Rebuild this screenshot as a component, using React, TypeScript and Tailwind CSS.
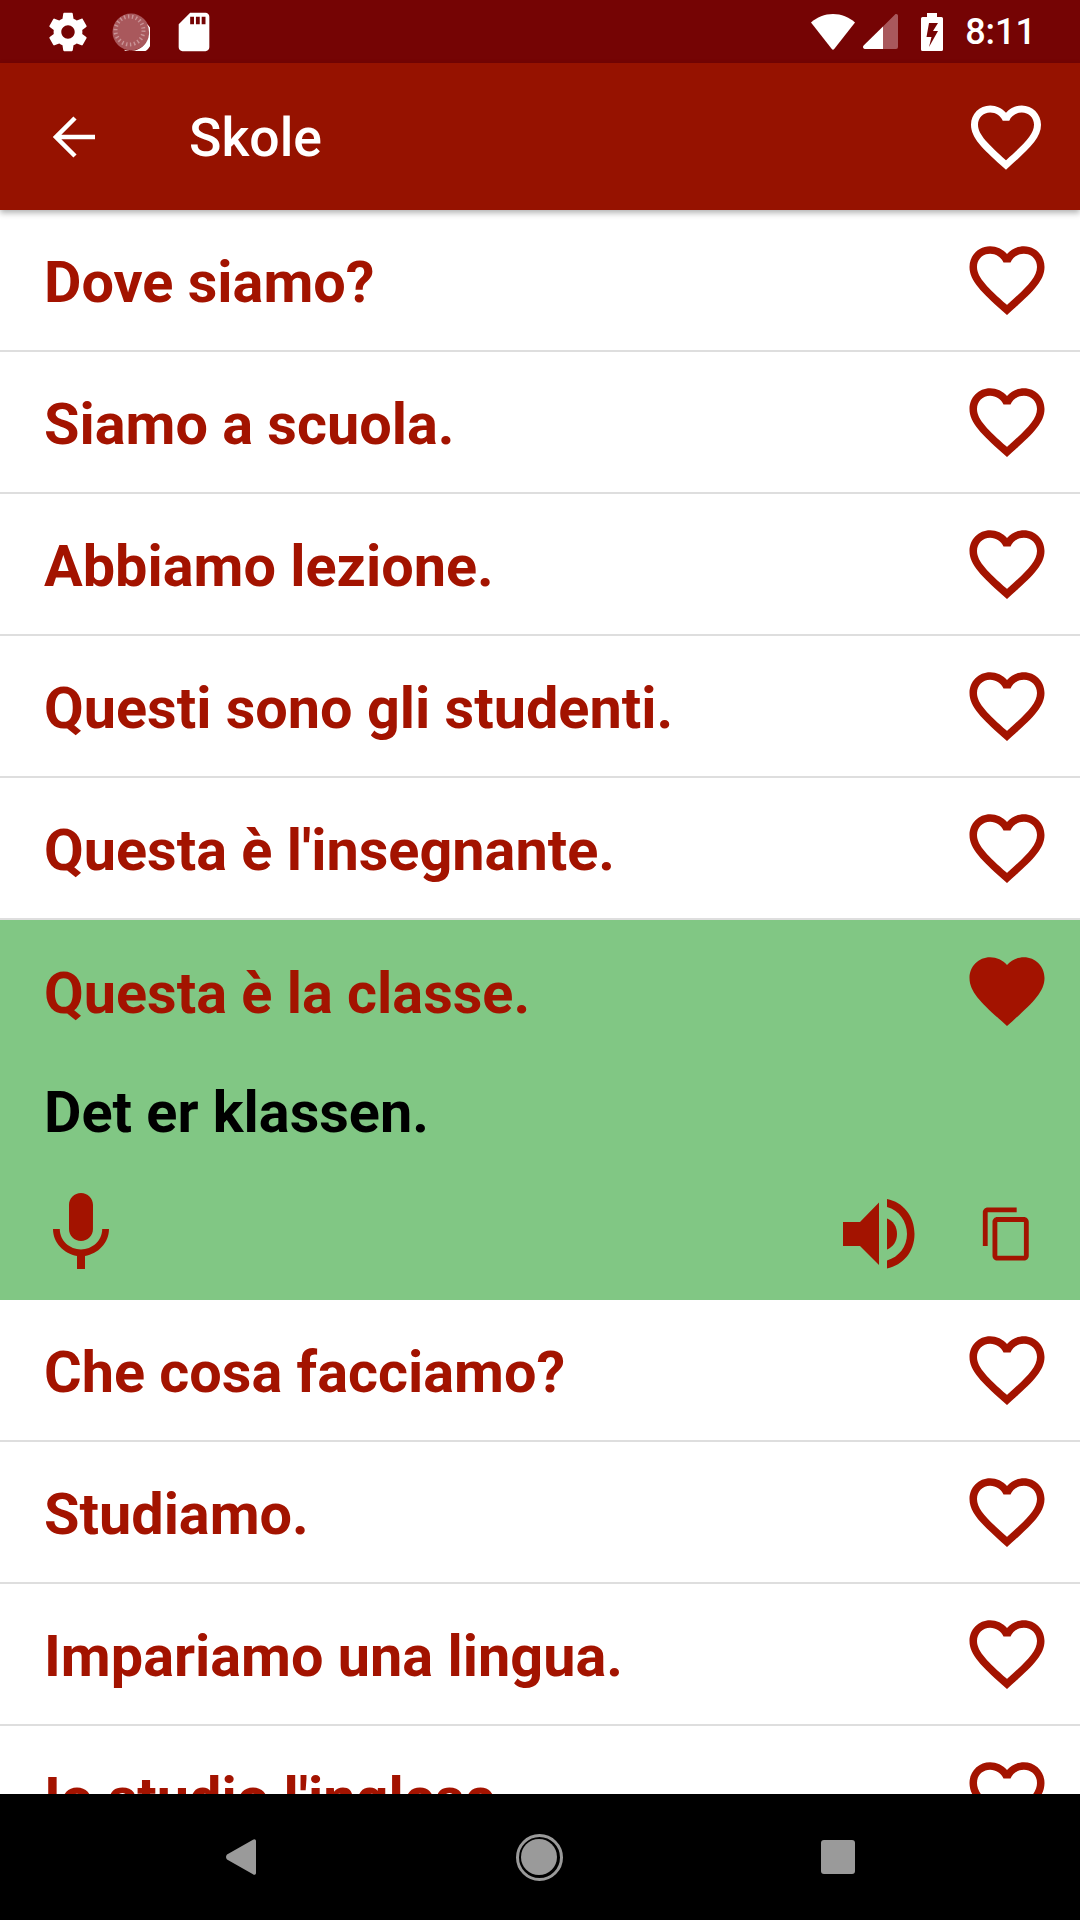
const phrases = [
  "Dove siamo?",
  "Siamo a scuola.",
  "Abbiamo lezione.",
  "Questi sono gli studenti.",
  "Questa è l'insegnante.",
  "Questa è la classe.",
  "Che cosa facciamo?",
  "Studiamo.",
  "Impariamo una lingua.",
  "Io studio l'inglese.",
];

const HEART_OUTLINE =
  "M16.5 3c-1.74 0-3.41.81-4.5 2.09C10.91 3.81 9.24 3 7.5 3 4.42 3 2 5.42 2 8.5c0 3.78 3.4 6.86 8.55 11.54L12 21.35l1.45-1.32C18.6 15.36 22 12.28 22 8.5 22 5.42 19.58 3 16.5 3zm-4.4 15.55l-.1.1-.1-.1C7.14 14.24 4 11.39 4 8.5 4 6.5 5.5 5 7.5 5c1.54 0 3.04.99 3.57 2.36h1.87C13.46 5.99 14.96 5 16.5 5c2 0 3.5 1.5 3.5 3.5 0 2.89-3.14 5.74-7.9 10.05z";
const HEART_FILLED =
  "M12 21.35l-1.45-1.32C5.4 15.36 2 12.28 2 8.5 2 5.42 4.42 3 7.5 3c1.74 0 3.41.81 4.5 2.09C13.09 3.81 14.76 3 16.5 3 19.58 3 22 5.42 22 8.5c0 3.78-3.4 6.86-8.55 11.54L12 21.35z";

function Icon({ d, className }: { d: string; className: string }) {
  return (
    <svg viewBox="0 0 24 24" fill="currentColor" className={className}>
      <path d={d} />
    </svg>
  );
}

function StatusBar() {
  return (
    <div className="flex h-[63px] shrink-0 items-center bg-[#750404] text-white">
      <Icon
        className="ml-[45px] h-[46px] w-[46px]"
        d="M19.43 12.98c.04-.32.07-.64.07-.98s-.03-.66-.07-.98l2.11-1.65c.19-.15.24-.42.12-.64l-2-3.46c-.12-.22-.39-.3-.61-.22l-2.49 1c-.52-.4-1.08-.73-1.69-.98l-.38-2.65C14.46 2.18 14.25 2 14 2h-4c-.25 0-.46.18-.49.42l-.38 2.65c-.61.25-1.17.59-1.69.98l-2.49-1c-.23-.09-.49 0-.61.22l-2 3.46c-.13.22-.07.49.12.64l2.11 1.65c-.04.32-.07.65-.07.98s.03.66.07.98l-2.11 1.65c-.19.15-.24.42-.12.64l2 3.46c.12.22.39.3.61.22l2.49-1c.52.4 1.08.73 1.69.98l.38 2.65c.03.24.24.42.49.42h4c.25 0 .46-.18.49-.42l.38-2.65c.61-.25 1.17-.59 1.69-.98l2.49 1c.23.09.49 0 .61-.22l2-3.46c.12-.22.07-.49-.12-.64l-2.11-1.65zM12 15.5c-1.93 0-3.5-1.57-3.5-3.5s1.57-3.5 3.5-3.5 3.5 1.57 3.5 3.5-1.57 3.5-3.5 3.5z"
      />
      <svg viewBox="0 0 38 38" className="ml-[21px] h-[38px] w-[38px]">
        <circle cx="19" cy="19" r="18.5" fill="#a9585c" />
        <circle cx="17.5" cy="17.5" r="14" fill="none" stroke="#c99396" strokeWidth="4" strokeDasharray="1.4 2.6" />
        <path d="M35 11A18.500 18.500 0 0 1 12 36.800 17 17 0 0 0 35 11z" fill="#fff" />
      </svg>
      <Icon
        className="ml-[21px] h-[46px] w-[46px]"
        d="M18 2h-8L4.02 8 4 20c0 1.1.9 2 2 2h12c1.1 0 2-.9 2-2V4c0-1.1-.9-2-2-2zm-6 6h-2V4h2v4zm3 0h-2V4h2v4zm3 0h-2V4h2v4z"
      />
      <div className="flex-1" />
      <svg viewBox="0 0 44 36" fill="#fff" className="h-[36px] w-[44px]">
        <path d="M0 8.5C6 3.2 13.6 0 22 0s16 3.2 22 8.5L23.2 35a1.6 1.6 0 0 1-2.4 0z" />
      </svg>
      <svg viewBox="0 0 35 35" className="ml-[8px] h-[35px] w-[35px]">
        <path d="M20 12.5 32.5 0a2 2 0 0 1 2.5 2v31a2 2 0 0 1-2 2H20z" fill="#a9585c" />
        <path d="M20 12.5V35H2a2 2 0 0 1-1.4-3.4z" fill="#fff" />
      </svg>
      <svg viewBox="0 0 22 38" fill="#fff" className="ml-[23px] h-[38px] w-[22px]">
        <path
          fillRule="evenodd"
          d="M6 0h10v4h4.500A1.500 1.500 0 0 1 22 5.500V36.500a1.500 1.500 0 0 1-1.500 1.500H1.500A1.500 1.500 0 0 1 0 36.500V5.500A1.500 1.500 0 0 1 1.500 4H6zM8 10 5.500 24h5L8 34 17 18h-5L17 10z"
        />
      </svg>
      <span className="mr-[44px] ml-[22px] text-[36px] font-medium leading-none">8:11</span>
    </div>
  );
}

function Toolbar() {
  return (
    <div className="relative z-10 flex h-[147px] shrink-0 items-center bg-[#961200] text-white shadow-[0_3px_6px_rgba(0,0,0,0.3)]">
      <svg viewBox="0 0 42 42" fill="none" stroke="#fff" strokeWidth="4.500" className="ml-[53px] h-[42px] w-[42px]">
        <path d="M42 21H3M22 2 3 21l19 19" />
      </svg>
      <span className="ml-[94px] flex-1 pt-[3px] text-[53.5px] font-medium leading-none">Skole</span>
      <Icon className="mr-[32px] h-[84px] w-[84px]" d={HEART_OUTLINE} />
    </div>
  );
}

function ActionBar() {
  return (
    <div className="flex h-[115px] items-start text-[#a31300]">
      <Icon
        className="ml-[33px] h-[96px] w-[96px]"
        d="M12 14c1.660 0 2.990-1.340 2.990-3L15 5c0-1.660-1.340-3-3-3S9 3.340 9 5v6c0 1.660 1.340 3 3 3zm5.300-3c0 3-2.540 5.100-5.300 5.100S6.700 14 6.700 11H5c0 3.410 2.720 6.230 6 6.720V21h2v-3.280c3.280-.48 6-3.300 6-6.720h-1.700z"
      />
      <div className="flex-1" />
      <svg viewBox="0 0 72 70" fill="currentColor" className="mt-[14px] h-[70px] w-[72px]">
        <path d="M0 23h17L36 3.500V66L17 47H0z" />
        <path d="M44 19.500c6 2 10 8 10 15.500s-4 13-10 15.500z" />
        <path d="M44 0c16 3 27.500 17 27.500 35S60 66 44 69.500v-8C56 58 64 47.500 64 35S56 11 44 8z" />
      </svg>
      <Icon
        className="mt-[20px] mr-[44px] ml-[63px] h-[58px] w-[58px]"
        d="M16 1H4c-1.100 0-2 .9-2 2v14h2V3h12V1zm3 4H8c-1.100 0-2 .9-2 2v14c0 1.100.9 2 2 2h11c1.100 0 2-.9 2-2V7c0-1.100-.9-2-2-2zm0 16H8V7h11v14z"
      />
    </div>
  );
}

function PhraseRow({ text, open }: { text: string; open: boolean }) {
  return (
    <div className={open ? "bg-[#81c784]" : "border-b-2 border-[#dedede] bg-white"}>
      <div className={`flex items-center pl-[44px] ${open ? "h-[142px]" : "h-[140px]"}`}>
        <span className="flex-1 pt-[5px] text-[57.6px] font-bold leading-none text-[#a31300]">{text}</span>
        <Icon className="mr-[28px] h-[90px] w-[90px] text-[#a31300]" d={open ? HEART_FILLED : HEART_OUTLINE} />
      </div>
      {open && (
        <>
          <div className="flex h-[96px] items-center pl-[44px]">
            <span className="pt-[5px] text-[57.6px] font-bold leading-none text-black">Det er klassen.</span>
          </div>
          <div className="h-[27px]" />
          <ActionBar />
        </>
      )}
    </div>
  );
}

function NavBar() {
  return (
    <div className="flex h-[126px] shrink-0 items-center justify-center bg-black">
      <svg viewBox="0 0 30 36" fill="#9a9a9a" className="h-[36px] w-[30px]">
        <path d="M1 20.500a4 4 0 0 1 0-5L27 .8c1.200-1.300 3-.6 3 1.200v32c0 1.800-1.800 2.500-3 1.200z" />
      </svg>
      <div className="ml-[260px] flex h-[47px] w-[47px] items-center justify-center rounded-full border-[3px] border-[#9a9a9a]">
        <div className="h-[36px] w-[36px] rounded-full bg-[#9a9a9a]" />
      </div>
      <div className="ml-[258px] h-[34px] w-[34px] rounded-[3px] bg-[#9a9a9a]" />
    </div>
  );
}

export default function App() {
  return (
    <div className="flex h-[1920px] w-[1080px] flex-col overflow-hidden bg-white font-['Roboto',sans-serif]">
      <StatusBar />
      <Toolbar />
      <div className="min-h-0 flex-1 overflow-hidden">
        {phrases.map((text, i) => (
          <PhraseRow key={text} text={text} open={i === 5} />
        ))}
      </div>
      <NavBar />
    </div>
  );
}
